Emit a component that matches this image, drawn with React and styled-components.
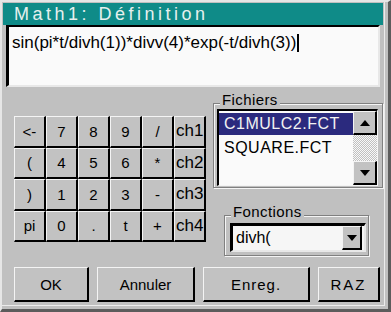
import React from 'react'
import styled, { createGlobalStyle } from 'styled-components'

const GlobalStyle = createGlobalStyle`
	html, body {
		margin: 0;
		padding: 0;
		background: #c0c0c0;
	}
	body {
		font-family: 'Liberation Sans', Arial, sans-serif;
	}
`

const Window = styled.div`
	box-sizing: border-box;
	width: 391px;
	height: 312px;
	background: #c0c0c0;
	border-top: 2px solid #e6e6e6;
	border-left: 2px solid #e6e6e6;
	border-right: 3px solid #5c5c5c;
	border-bottom: 3px solid #5c5c5c;
	padding: 1px 5px 0 1px;
	box-shadow: inset -3px -3px 0 #c0c0c0, inset -4px -4px 0 #ececec;
	display: flex;
	flex-direction: column;
	font-family: 'Liberation Sans', Arial, sans-serif;
	color: #000;
`

const TitleBar = styled.div`
	flex-shrink: 0;
	height: 22px;
	line-height: 22px;
	padding-left: 11px;
	background: #0f8b88;
	color: #e6f0ee;
	font-size: 18px;
	letter-spacing: 3.5px;
	white-space: nowrap;
`

const Editor = styled.div`
	flex-shrink: 0;
	box-sizing: border-box;
	height: 62px;
	margin: 0 3px;
	padding: 6px 3px 0;
	background: #fafafa;
	border-top: 2px solid #000;
	border-left: 3px solid #000;
	border-right: 2px solid #e8e8e8;
	border-bottom: 2px solid #e8e8e8;
	font-size: 17px;
	line-height: 20px;
	white-space: nowrap;
	overflow: hidden;
`

const Caret = styled.span`
	display: inline-block;
	width: 2px;
	height: 18px;
	margin-left: 1px;
	background: #000;
	vertical-align: -4px;
`

const Body = styled.div`
	flex: 1;
	display: flex;
	align-items: flex-start;
	padding-left: 11px;
`

const Keypad = styled.div`
	margin-top: 29px;
	display: grid;
	grid-template-columns: repeat(6, 32px);
	grid-auto-rows: 31.5px;
`

const Key = styled.div`
	box-sizing: border-box;
	display: flex;
	align-items: center;
	justify-content: ${(p) => (p.$side ? 'flex-start' : 'center')};
	padding-left: ${(p) => (p.$side ? '1px' : '0')};
	background: #c2c2c2;
	border-top: 1px solid #f4f4f4;
	border-left: 1px solid #f4f4f4;
	border-right: 2px solid #000;
	border-bottom: 2px solid #000;
	font-size: ${(p) => (p.$side ? '17px' : '15px')};
	white-space: nowrap;
	overflow: hidden;
`

const Side = styled.div`
	margin: 16px 0 0 7px;
	width: 170px;
	display: flex;
	flex-direction: column;
`

const GroupBox = styled.div`
	box-sizing: border-box;
	width: ${(p) => p.$width}px;
	margin-left: ${(p) => p.$indent || 0}px;
	border: 1px solid #808080;
	box-shadow: 1px 1px 0 #f4f4f4, inset 1px 1px 0 #f4f4f4;
	display: flex;
	flex-direction: column;
`

const Caption = styled.span`
	display: block;
	width: fit-content;
	margin: -12px 0 0 6px;
	padding: 0 2px;
	background: #c0c0c0;
	font-size: 15px;
	line-height: 16px;
	letter-spacing: 0.4px;
`

const ListBox = styled.div`
	box-sizing: border-box;
	display: flex;
	width: 161px;
	height: 77px;
	margin: 1px 0 1px 3px;
	background: #fafafa;
	border-top: 2px solid #000;
	border-left: 2px solid #000;
	border-right: 1px solid #f4f4f4;
	border-bottom: 1px solid #f4f4f4;
`

const Items = styled.div`
	flex: 1;
	padding-top: 2px;
	display: flex;
	flex-direction: column;
	gap: 2px;
`

const Item = styled.div`
	height: 22px;
	line-height: 22px;
	padding-left: 5px;
	font-size: 16px;
	letter-spacing: 0.5px;
	background: ${(p) => (p.$selected ? '#2b2a7e' : 'transparent')};
	color: ${(p) => (p.$selected ? '#f2f2f2' : '#000')};
`

const ScrollBar = styled.div`
	width: 24px;
	display: flex;
	flex-direction: column;
`

const Track = styled.div`
	flex: 1;
	background: repeating-conic-gradient(#c0c0c0 0 25%, #f8f8f8 0 50%) 0 0 / 2px 2px;
`

const ArrowButton = styled.div`
	box-sizing: border-box;
	width: ${(p) => p.$w || 24}px;
	height: 24px;
	flex-shrink: 0;
	display: flex;
	align-items: center;
	justify-content: center;
	background: #c2c2c2;
	border-top: 1px solid #f4f4f4;
	border-left: 1px solid #f4f4f4;
	border-right: 2px solid #000;
	border-bottom: 2px solid #000;
`

const Combo = styled.div`
	box-sizing: border-box;
	display: flex;
	align-items: center;
	width: 136px;
	height: 29px;
	margin: 3px 0 3px 5px;
	padding-left: 3px;
	background: #f6f6f6;
	border-top: 3px solid #000;
	border-left: 3px solid #000;
	border-right: 2px solid #e8e8e8;
	border-bottom: 2px solid #e8e8e8;
	font-size: 16px;
`

const ComboText = styled.span`
	flex: 1;
`

const Footer = styled.div`
	flex-shrink: 0;
	display: flex;
	gap: 8px;
	padding: 0 0 7px 11px;
`

const Button = styled.div`
	box-sizing: border-box;
	width: ${(p) => p.$width}px;
	height: 35px;
	display: flex;
	align-items: center;
	justify-content: center;
	background: #c2c2c2;
	border-top: 1px solid #f4f4f4;
	border-left: 1px solid #f4f4f4;
	border-right: 2px solid #000;
	border-bottom: 2px solid #000;
	font-size: 15px;
	letter-spacing: ${(p) => p.$spacing || 0}px;
`

const Arrow = ({ dir }) => (
	<svg width='10' height='6' viewBox='0 0 10 6'>
		{dir === 'up' ? <polygon points='0,6 10,6 5,0' fill='#000' /> : <polygon points='0,0 10,0 5,6' fill='#000' />}
	</svg>
)

const keys = [
	['<-', '7', '8', '9', '/', 'ch1'],
	['(', '4', '5', '6', '*', 'ch2'],
	[')', '1', '2', '3', '-', 'ch3'],
	['pi', '0', '.', 't', '+', 'ch4'],
]

export default function App() {
	return (
		<>
			<GlobalStyle />
			<Window>
				<TitleBar>Math1: Définition</TitleBar>
				<Editor>
					sin(pi*t/divh(1))*divv(4)*exp(-t/divh(3))
					<Caret />
				</Editor>
				<Body>
					<Keypad>
						{keys.flat().map((k, i) => (
							<Key key={i} $side={k.startsWith('ch')}>
								{k}
							</Key>
						))}
					</Keypad>
					<Side>
						<GroupBox $width={170}>
							<Caption>Fichiers</Caption>
							<ListBox>
								<Items>
									<Item $selected>C1MULC2.FCT</Item>
									<Item>SQUARE.FCT</Item>
								</Items>
								<ScrollBar>
									<ArrowButton>
										<Arrow dir='up' />
									</ArrowButton>
									<Track />
									<ArrowButton>
										<Arrow dir='down' />
									</ArrowButton>
								</ScrollBar>
							</ListBox>
						</GroupBox>
						<GroupBox $width={145} $indent={11} style={{ marginTop: 27 }}>
							<Caption>Fonctions</Caption>
							<Combo>
								<ComboText>divh(</ComboText>
								<ArrowButton $w={20} style={{ marginRight: 2 }}>
									<Arrow dir='down' />
								</ArrowButton>
							</Combo>
						</GroupBox>
					</Side>
				</Body>
				<Footer>
					<Button $width={75}>OK</Button>
					<Button $width={98}>Annuler</Button>
					<Button $width={107} $spacing={1}>
						Enreg.
					</Button>
					<Button $width={62} $spacing={2}>
						RAZ
					</Button>
				</Footer>
			</Window>
		</>
	)
}
